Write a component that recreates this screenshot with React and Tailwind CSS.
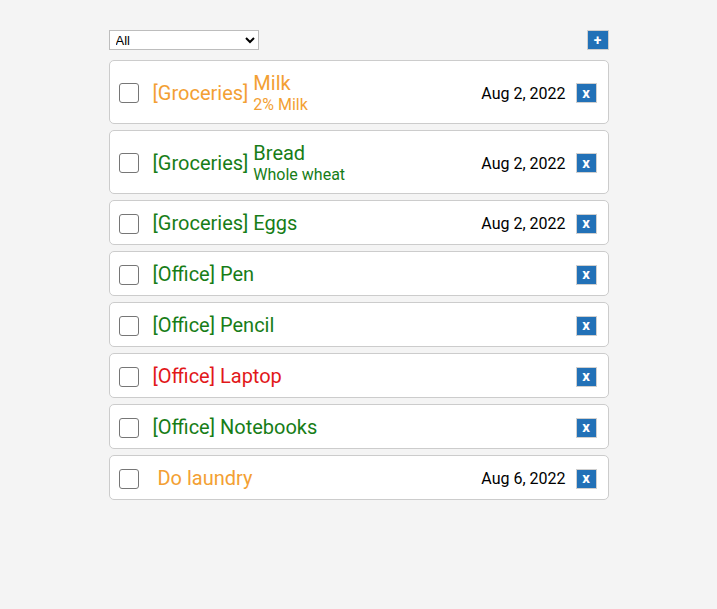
import React from "react";

const ORANGE = "text-[#f3a033]";
const GREEN = "text-[#177d17]";
const RED = "text-[#e2181a]";

const items = [
  { cat: "[Groceries]", title: "Milk", sub: "2% Milk", date: "Aug 2, 2022", color: ORANGE },
  { cat: "[Groceries]", title: "Bread", sub: "Whole wheat", date: "Aug 2, 2022", color: GREEN },
  { cat: "[Groceries]", title: "Eggs", date: "Aug 2, 2022", color: GREEN },
  { cat: "[Office]", title: "Pen", color: GREEN },
  { cat: "[Office]", title: "Pencil", color: GREEN },
  { cat: "[Office]", title: "Laptop", color: RED },
  { cat: "[Office]", title: "Notebooks", color: GREEN },
  { cat: "", title: "Do laundry", date: "Aug 6, 2022", color: ORANGE },
];

function Row({ item }) {
  return (
    <div className="flex items-center bg-white border border-[#cccccc] rounded-[5px] pl-[9px] pr-[11px] pt-[11px] pb-[9px]">
      <div className="w-5 h-5 shrink-0 border border-[#767676] rounded-[3px] bg-white" />
      <div className={`ml-[14px] flex items-center flex-1 ${item.color}`}>
        <span className="text-[20px] leading-[23px] whitespace-pre">{item.cat + " "}</span>
        <div className="flex flex-col">
          <span className="text-[20px] leading-[23px]">{item.title}</span>
          {item.sub && <span className="text-[16px] leading-[19px]">{item.sub}</span>}
        </div>
      </div>
      {item.date && <span className="text-[16px] leading-[23px] text-black">{item.date}</span>}
      <button className="ml-[10px] w-[21px] h-[20px] bg-[#2271b7] border border-[#cfcfcf] text-white font-bold text-[15px] leading-none flex items-center justify-center">
        x
      </button>
    </div>
  );
}

export default function App() {
  return (
    <div className="min-h-[609px] bg-[#f4f4f4] font-['Roboto',sans-serif]">
      <div className="w-[500px] mx-auto pt-[30px]">
        <div className="flex items-center justify-between">
          <select className="w-[150px] h-[20px] border border-[#bdbdbd] bg-white text-[13px] text-black font-['Liberation_Sans',sans-serif] pl-[2px]">
            <option>All</option>
          </select>
          <button className="w-[22px] h-[20px] bg-[#2271b7] border border-[#cfcfcf] text-white font-bold text-[14px] leading-none flex items-center justify-center">
            +
          </button>
        </div>
        <div className="mt-[10px] flex flex-col gap-[6px]">
          {items.map((it, i) => (
            <Row key={i} item={it} />
          ))}
        </div>
      </div>
    </div>
  );
}
